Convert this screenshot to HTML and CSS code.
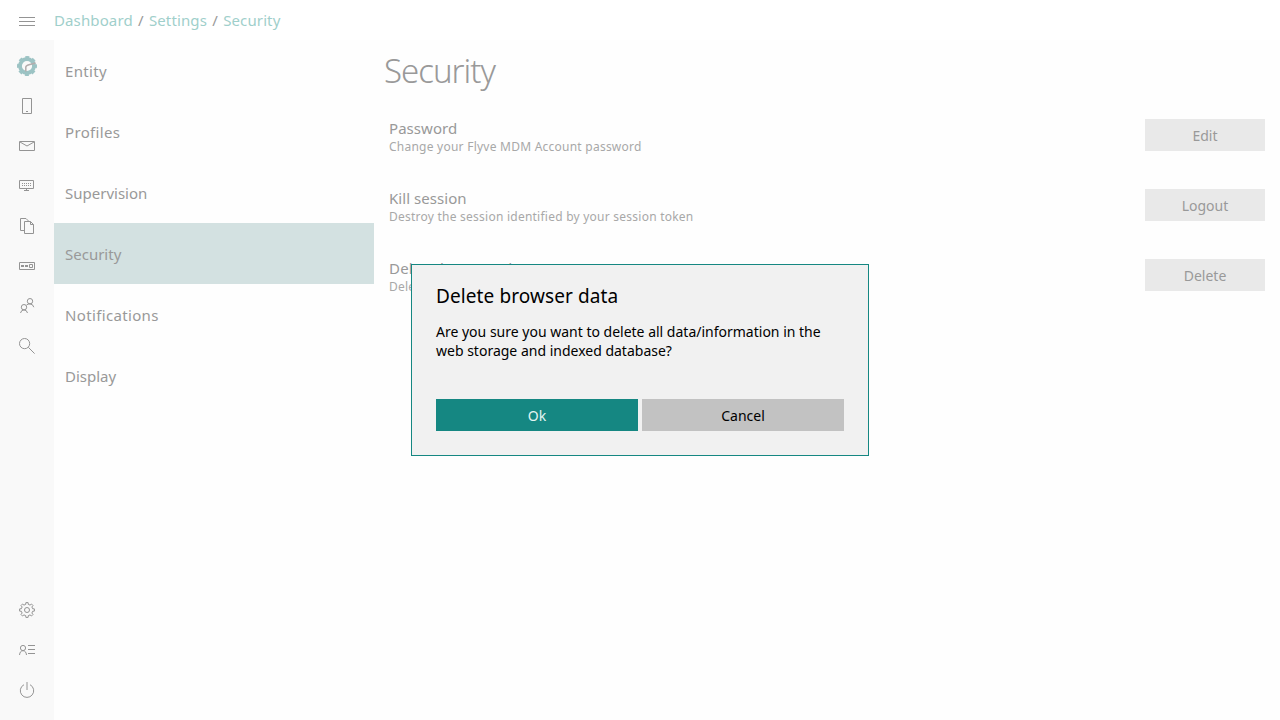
FILE: index.html
```html
<!DOCTYPE html>
<html lang="en">
<head>
<meta charset="utf-8">
<title>Security</title>
<link rel="stylesheet" href="styles.css">
</head>
<body>
<div class="app">
  <header class="topbar">
    <span class="menu-button"><svg class="icon" width="16" height="16" viewBox="0 0 16 16"><path d="M0 4.5h16M0 8.5h16M0 12.5h16"/></svg></span>
    <nav class="crumbs"><a>Dashboard</a><i>/</i><a>Settings</a><i>/</i><a>Security</a></nav>
  </header>
  <div class="body">
    <aside class="rail">
      <div class="rail-group">
        <span class="rail-item"><svg width="20" height="20" viewBox="0 0 20 20"><circle cx="10" cy="10" r="7" fill="none" stroke="#9cc3c4" stroke-width="3.800"/><circle cx="10" cy="10" r="9" fill="none" stroke="#9cc3c4" stroke-width="2" stroke-dasharray="4 3.070" stroke-dashoffset="2"/><path d="M8.800 15.500V11Q9 9.500 12 8.700l6.500-1.700" fill="none" stroke="#b3acac" stroke-width="1.500"/></svg></span>
        <span class="rail-item"><svg class="icon" width="16" height="16" viewBox="0 0 16 16"><path d="M3.500.5h9v15h-9zM7 13.500h2"/></svg></span>
        <span class="rail-item"><svg class="icon" width="16" height="16" viewBox="0 0 16 16"><path d="M.5 3.500h15v9H.5zM1 4l7 4 7-4"/></svg></span>
        <span class="rail-item"><svg class="icon" width="16" height="16" viewBox="0 0 16 16"><path d="M.5 2.500h14v8H.5zM7.500 10.500v2M5 12.500h5"/><path d="M3 5.500h10M3 7.500h10" stroke-dasharray="1 1"/></svg></span>
        <span class="rail-item"><svg class="icon" width="16" height="16" viewBox="0 0 16 16"><path d="M5 12.500H1.500V.5H7l2.500 2.500M5.500 3.500h6l3 3v9h-9zM11.500 3.500v3h3"/></svg></span>
        <span class="rail-item"><svg class="icon" width="16" height="16" viewBox="0 0 16 16"><path d="M.5 4.500h15v7H.5zM10.500 6.500h3v3h-3z"/><path d="M2 8h3M6 8h3" stroke-width="2"/></svg></span>
        <span class="rail-item"><svg class="icon" width="16" height="16" viewBox="0 0 16 16"><circle cx="11" cy="3.200" r="2.700"/><circle cx="5" cy="9.200" r="2.700"/><path d="M7.500 7Q9 5.800 11 5.900q3 .1 3.800 3.300M1.500 15q.7-3.100 3.500-3.100t3.500 3.100"/></svg></span>
        <span class="rail-item"><svg class="icon" width="16" height="16" viewBox="0 0 16 16"><circle cx="5.600" cy="5.600" r="5.100"/><path d="M9.300 9.300l6.300 6.300"/></svg></span>
      </div>
      <div class="rail-group">
        <span class="rail-item"><svg class="icon" width="16" height="16" viewBox="-8 -8 16 16"><circle r="2.500"/><path d="M-1.300-5.600-1.100-7.400H1.100L1.300-5.600 3.040-4.880 4.450-6.010 6.010-4.450 4.880-3.040 5.600-1.300 7.400-1.100V1.100L5.600 1.300 4.880 3.040 6.010 4.450 4.450 6.010 3.040 4.880 1.300 5.600 1.100 7.400H-1.100L-1.300 5.600-3.040 4.880-4.450 6.010-6.010 4.450-4.880 3.040-5.600 1.300-7.400 1.100V-1.100L-5.600-1.300-4.880-3.040-6.010-4.450-4.450-6.010-3.040-4.880z"/></svg></span>
        <span class="rail-item"><svg class="icon" width="16" height="16" viewBox="0 0 16 16"><circle cx="4" cy="6" r="2.600"/><path d="M.5 13q.5-4.300 3.500-4.300T7.500 13M9 3.500h7M9 7.500h7M9 11.500h7"/></svg></span>
        <span class="rail-item"><svg class="icon" width="16" height="16" viewBox="0 0 16 16"><path d="M5 2.700a6.700 6.700 0 1 0 6 0M8 0v8"/></svg></span>
      </div>
    </aside>
    <ul class="list">
      <li class="wide">Entity</li>
      <li class="wide">Profiles</li>
      <li>Supervision</li>
      <li class="selected">Security</li>
      <li class="wide">Notifications</li>
      <li>Display</li>
    </ul>
    <main class="content">
      <h1>Security</h1>
      <section class="row"><div><div class="title">Password</div><div class="detail">Change your Flyve MDM Account password</div></div><button class="btn">Edit</button></section>
      <section class="row"><div><div class="title">Kill session</div><div class="detail">Destroy the session identified by your session token</div></div><button class="btn">Logout</button></section>
      <section class="row"><div><div class="title wide">Delete browser data</div><div class="detail">Delete</div></div><button class="btn">Delete</button></section>
    </main>
  </div>
</div>
<div class="dialog" role="dialog">
  <h2>Delete browser data</h2>
  <p>Are you sure you want to delete all data/information in the<br>web storage and indexed database?</p>
  <div class="actions"><button class="btn ok">Ok</button><button class="btn cancel">Cancel</button></div>
</div>
</body>
</html>
```
FILE: styles.css
```css
* { box-sizing: border-box; }
body { margin: 0; background: #fefefe; color: #999; font: 15px/20px "Noto Sans", "Open Sans", sans-serif; overflow: hidden; }
.app { height: 720px; display: flex; flex-direction: column; }
.topbar { height: 40px; display: flex; align-items: center; background: #fff; }
.menu-button { width: 54px; display: flex; justify-content: center; padding-top: 1px; }
.icon { fill: none; stroke: #949494; stroke-width: 1; }
.crumbs { display: flex; letter-spacing: .12px; }
.crumbs a { color: #9fcfcb; }
.crumbs i { font-style: normal; width: 16.200px; text-align: center; }
.body { flex: 1; display: flex; }
.rail { width: 54px; background: #f9f9f9; display: flex; flex-direction: column; justify-content: space-between; padding: 6px 0 10px; }
.rail-group { display: flex; flex-direction: column; }
.rail-item { height: 40px; display: flex; align-items: center; justify-content: center; }
.list { width: 320px; margin: 0; padding: 0; list-style: none; }
.list li { height: 61px; padding: 21px 11px 0; }
.list .wide { letter-spacing: .35px; }
.list .selected { background: #d3e1e1; }
.content { flex: 1; padding: 9px 15px 0 10px; }
h1 { margin: 0 0 20px; font-size: 33px; line-height: 44px; font-weight: 300; height: 44px; letter-spacing: -1px; }
.row { height: 70px; padding: 6px 0 0 5px; display: flex; justify-content: space-between; align-items: flex-start; }
.title { line-height: 18px; padding-bottom: 2px; letter-spacing: .05px; }
.title.wide { letter-spacing: .2px; }
.detail { font-size: 12px; line-height: 16px; color: #a8a8a8; letter-spacing: .24px; }
.btn { width: 120px; height: 32px; border: 0; padding: 2px 0 0; background: #e9e9e9; color: #999; font: 14px/20px "Noto Sans", "Open Sans", sans-serif; }
.dialog { position: absolute; left: 411px; top: 264px; width: 458px; height: 192px; padding: 19px 24px 24px; border: 1px solid #158782; background: #f1f1f1; color: #000; display: flex; flex-direction: column; }
h2 { margin: 0; font-size: 19px; line-height: 24px; font-weight: 400; letter-spacing: .1px; }
.dialog p { margin: 14px 0 0; font-size: 14px; line-height: 19px; white-space: nowrap; }
.actions { margin-top: auto; display: flex; gap: 4px; }
.actions .btn { flex: 1; }
.actions .ok { background: #158782; color: #e3f5f3; }
.actions .cancel { background: #c2c2c2; color: #000; }
```
